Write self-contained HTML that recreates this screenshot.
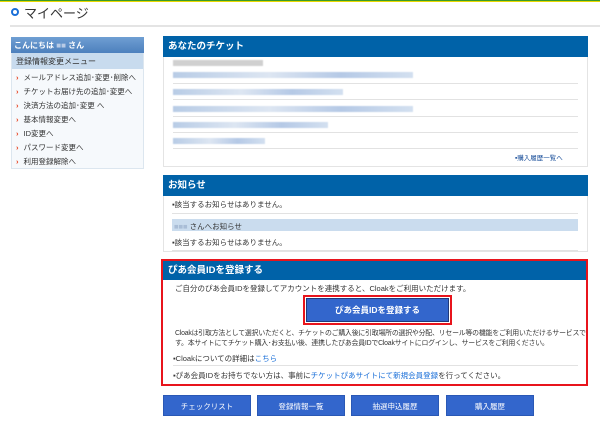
<!DOCTYPE html>
<html><head><meta charset="utf-8"><style>
*{margin:0;padding:0;box-sizing:border-box}
body{width:600px;height:422px;background:#fff;font-family:"Liberation Sans","Noto Sans CJK JP",sans-serif;position:relative;overflow:hidden;color:#333}
.a{position:absolute}
.t8{font-size:7.5px;white-space:nowrap}
.hd{background:#0062a8;color:#fff;font-weight:bold;font-size:9.5px;padding-left:5px}
.blur{position:absolute;height:6px;background:linear-gradient(90deg,#b8cce6,#dde6f2 40%,#b5c9e6 70%,#d3e0f0);filter:blur(0.5px)}
.ln{position:absolute;height:1px;background:#e2e2e2}
.btn{position:absolute;top:395px;height:21px;width:88px;background:#3366cc;color:#fff;font-size:7.5px;text-align:center;line-height:21px;border:1px solid #2a58b5}
.mi{position:absolute;left:16px;font-size:7.5px;color:#333;white-space:nowrap}
.mi:before{content:"›";color:#e8401c;font-weight:bold;margin-right:5px}
</style></head><body>
<div class="a" style="left:0;top:0;width:600px;height:1px;background:#3a9a2a"></div>
<div class="a" style="left:0;top:1px;width:600px;height:1px;background:#e8d800"></div>
<div class="a" style="left:11px;top:8px;width:8px;height:8px;border:2px solid #1a6fd8;border-radius:50%"></div>
<div class="a" style="left:24px;top:3px;font-size:13px;color:#333">マイページ</div>
<div class="a" style="left:10px;top:25px;width:590px;height:2px;background:#e4e4e4"></div>

<div class="a" style="left:11px;top:37px;width:133px;height:132px;border:1px solid #dce6ef;background:#f6f9fc"></div>
<div class="a" style="left:11px;top:37px;width:133px;height:16px;background:linear-gradient(#6f9fd3,#4d80bd);color:#fff;font-size:8px;font-weight:bold;padding:3px 0 0 3px">こんにちは <span style="color:#b8cbe6">■■</span> さん</div>
<div class="a" style="left:12px;top:53px;width:131px;height:16px;background:#c8dbee;font-size:8px;padding:3px 0 0 4px;color:#333">登録情報変更メニュー</div>
<div class="mi" style="top:72px">メールアドレス追加･変更･削除へ</div>
<div class="mi" style="top:86px">チケットお届け先の追加･変更へ</div>
<div class="mi" style="top:100px">決済方法の追加･変更 へ</div>
<div class="mi" style="top:114px">基本情報変更へ</div>
<div class="mi" style="top:128px">ID変更へ</div>
<div class="mi" style="top:142px">パスワード変更へ</div>
<div class="mi" style="top:156px">利用登録解除へ</div>

<div class="a" style="left:163px;top:36px;width:425px;height:131px;border:1px solid #e4e4e4"></div>
<div class="a hd" style="left:163px;top:36px;width:425px;height:21px;line-height:21px">あなたのチケット</div>
<div class="blur" style="left:173px;top:60px;width:90px;background:#d0d0d0"></div>
<div class="blur" style="left:173px;top:72px;width:240px"></div>
<div class="ln" style="left:173px;top:83px;width:405px"></div>
<div class="blur" style="left:173px;top:89px;width:170px"></div>
<div class="ln" style="left:173px;top:99px;width:405px"></div>
<div class="blur" style="left:173px;top:106px;width:240px"></div>
<div class="ln" style="left:173px;top:116px;width:405px"></div>
<div class="blur" style="left:173px;top:122px;width:155px"></div>
<div class="ln" style="left:173px;top:132px;width:405px"></div>
<div class="blur" style="left:173px;top:138px;width:92px"></div>
<div class="ln" style="left:173px;top:148px;width:405px"></div>
<div class="a t8" style="left:515px;top:152px;color:#1a4f9a;font-size:6.5px">▪購入履歴一覧へ</div>

<div class="a" style="left:163px;top:175px;width:425px;height:77px;border:1px solid #e4e4e4"></div>
<div class="a hd" style="left:163px;top:175px;width:425px;height:21px;line-height:21px">お知らせ</div>
<div class="a t8" style="left:172px;top:199px">▪該当するお知らせはありません。</div>
<div class="ln" style="left:172px;top:213px;width:406px"></div>
<div class="a t8" style="left:172px;top:219px;width:406px;height:12px;background:#cadcee;padding:2px 0 0 2px"><span style="color:#a9bdd6">■■■</span> さんへお知らせ</div>
<div class="a t8" style="left:172px;top:237px">▪該当するお知らせはありません。</div>
<div class="ln" style="left:172px;top:250px;width:406px"></div>

<div class="a" style="left:161px;top:259px;width:427px;height:127px;border:2px solid #e8141c"></div>
<div class="a hd" style="left:163px;top:261px;width:423px;height:19px;line-height:19px">ぴあ会員IDを登録する</div>
<div class="a t8" style="left:175px;top:283px">ご自分のぴあ会員IDを登録してアカウントを連携すると、Cloakをご利用いただけます。</div>
<div class="a" style="left:303px;top:295px;width:149px;height:30px;border:2px solid #e8141c"></div>
<div class="a" style="left:306px;top:298px;width:143px;height:24px;background:#3366cc;border:1px solid #203a7a;color:#fff;font-size:8.5px;font-weight:bold;text-align:center;line-height:22px">ぴあ会員IDを登録する</div>
<div class="a" style="left:175px;top:329px;width:412px;font-size:6.9px;line-height:10px;letter-spacing:-0.2px">Cloakは引取方法として選択いただくと、チケットのご購入後に引取場所の選択や分配、リセール等の機能をご利用いただけるサービスです。本サイトにてチケット購入･お支払い後、連携したぴあ会員IDでCloakサイトにログインし、サービスをご利用ください。</div>
<div class="a t8" style="left:173px;top:353px">▪Cloakについての詳細は<span style="color:#1a6fd8">こちら</span></div>
<div class="ln" style="left:173px;top:365px;width:405px"></div>
<div class="a t8" style="left:173px;top:370px">▪ぴあ会員IDをお持ちでない方は、事前に<span style="color:#1a6fd8">チケットぴあサイトにて新規会員登録</span>を行ってください。</div>

<div class="btn" style="left:163px">チェックリスト</div>
<div class="btn" style="left:257px">登録情報一覧</div>
<div class="btn" style="left:351px">抽選申込履歴</div>
<div class="btn" style="left:446px">購入履歴</div>
</body></html>
